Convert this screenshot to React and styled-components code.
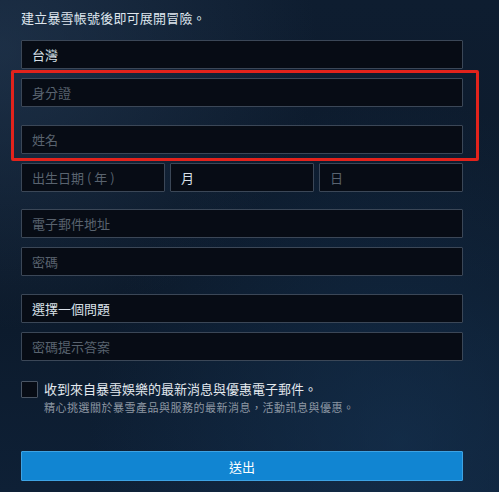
import React from 'react'
import styled, { createGlobalStyle } from 'styled-components'

const GlobalStyle = createGlobalStyle`
  html, body {
    margin: 0;
    padding: 0;
    background: #0d1b2d;
  }
  * {
    box-sizing: border-box;
  }
`

const Page = styled.div`
  width: 499px;
  height: 492px;
  overflow: hidden;
  padding: 9px 0 0 21px;
  font-family: 'Noto Sans CJK TC', 'Noto Sans', sans-serif;
  background:
    radial-gradient(ellipse at 0% 10%, rgba(40, 62, 88, 0.55), transparent 45%),
    radial-gradient(ellipse at 80% 90%, rgba(22, 52, 84, 0.6), transparent 55%),
    linear-gradient(180deg, #0e1d30 0%, #0c1a2b 60%, #0e2036 100%);
`

const Form = styled.div`
  width: 442px;
  display: flex;
  flex-direction: column;
`

const Heading = styled.div`
  color: #dfe6ee;
  font-size: 13px;
  line-height: 18px;
  margin-bottom: 13px;
  letter-spacing: 0.2px;
`

const Field = styled.div`
  height: 29px;
  flex: ${(p) => (p.grow ? '1' : 'none')};
  background: #070c15;
  border: 1px solid #3b4757;
  border-radius: 1px;
  padding: 0 10px;
  display: flex;
  align-items: center;
  font-size: 13px;
  color: ${(p) => (p.filled ? '#d9e0e8' : '#59636f')};
`

const Highlight = styled.div`
  display: flex;
  flex-direction: column;
  gap: 18px;
  margin: 1px -16px 2px -10px;
  padding: 5px 13px 4px 7px;
  border: 3px solid #e2231c;
  border-radius: 2px;
`

const Row = styled.div`
  display: flex;
  gap: 5px;
`

const Section = styled.div`
  display: flex;
  flex-direction: column;
  gap: 9px;
  margin-top: ${(p) => p.mt}px;
`

const CheckRow = styled.div`
  display: flex;
  gap: 6px;
  margin-top: 20px;
`

const Box = styled.div`
  width: 17px;
  height: 17px;
  flex: none;
  background: #070c15;
  border: 1px solid #4a5564;
  border-radius: 1px;
`

const CheckText = styled.div`
  display: flex;
  flex-direction: column;
  margin-top: -1px;
`

const Label = styled.div`
  color: #e3e9ef;
  font-size: 13px;
  line-height: 17px;
`

const Sub = styled.div`
  color: #8d97a3;
  font-size: 11px;
  line-height: 16px;
  margin-top: 2px;
  letter-spacing: 0.5px;
`

const Submit = styled.button`
  margin-top: 36px;
  height: 30px;
  width: 442px;
  background: #1185d2;
  border: 1px solid #3ea3e4;
  border-radius: 1px;
  color: #ffffff;
  font-family: inherit;
  font-size: 13px;
  cursor: pointer;
`

export default function App() {
  return (
    <>
      <GlobalStyle />
      <Page>
        <Form>
          <Heading>建立暴雪帳號後即可展開冒險。</Heading>
          <Field filled>台灣</Field>
          <Highlight>
            <Field>身分證</Field>
            <Field>姓名</Field>
          </Highlight>
          <Row>
            <Field grow>出生日期 ( 年 )</Field>
            <Field grow filled>月</Field>
            <Field grow>日</Field>
          </Row>
          <Section mt={17}>
            <Field>電子郵件地址</Field>
            <Field>密碼</Field>
          </Section>
          <Section mt={18}>
            <Field filled>選擇一個問題</Field>
            <Field>密碼提示答案</Field>
          </Section>
          <CheckRow>
            <Box />
            <CheckText>
              <Label>收到來自暴雪娛樂的最新消息與優惠電子郵件。</Label>
              <Sub>精心挑選關於暴雪產品與服務的最新消息，活動訊息與優惠。</Sub>
            </CheckText>
          </CheckRow>
          <Submit>送出</Submit>
        </Form>
      </Page>
    </>
  )
}
